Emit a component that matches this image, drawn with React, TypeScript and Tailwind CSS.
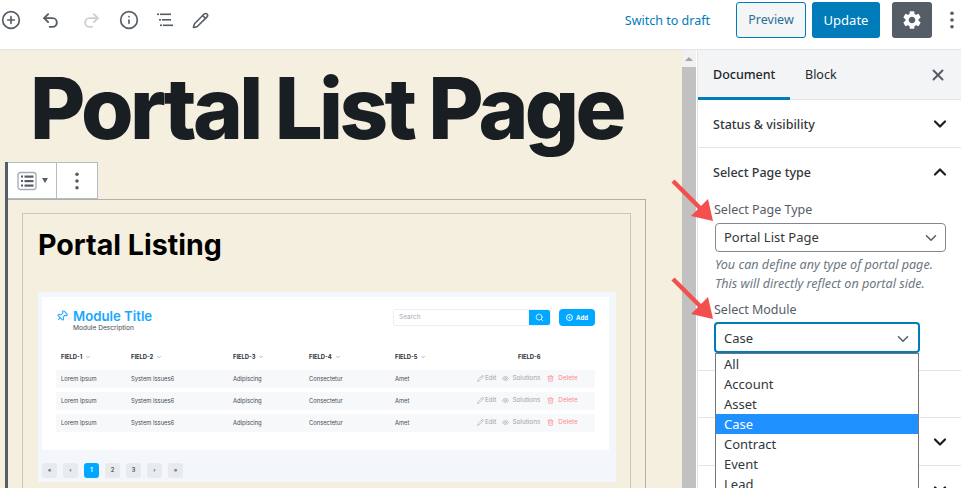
import { ChevronDown, ChevronUp, CirclePlus, Eye, Info, Pencil, Pin, Plus, Redo2, Search, Trash2, Undo2, X } from "lucide-react";
import { MdSettings } from "react-icons/md";

const rows = [0, 1, 2];
const fields = ["FIELD-1", "FIELD-2", "FIELD-3", "FIELD-4", "FIELD-5"];
const options = ["All", "Account", "Asset", "Case", "Contract", "Event", "Lead"];
const pages = ["«", "‹", "1", "2", "3", "›", "»"];

function Dots({ className }: { className?: string }) {
  return (
    <svg viewBox="0 0 4 20" className={className} fill="currentColor">
      <circle cx="2" cy="2.5" r="2" />
      <circle cx="2" cy="10" r="2" />
      <circle cx="2" cy="17.5" r="2" />
    </svg>
  );
}

function RedArrow() {
  return (
    <svg viewBox="0 0 44 44" className="w-[44px] h-[44px]" fill="none">
      <path d="M2 2 L36 36" stroke="#f44f4f" strokeWidth="4.5" />
      <path d="M42 42 L37 20 L20 37 Z" fill="#f44f4f" />
    </svg>
  );
}

function PortalImage() {
  return (
    <div className="mt-[29px] mr-[14px] h-[190px] bg-[#f3f6fa] px-[4px] pt-[5px] font-['Inter',sans-serif] text-[#444b55]">
      <div className="w-[567px] h-[153px] bg-white px-[14px] pt-[12px]">
        <div className="flex items-start h-[37px]">
          <Pin className="w-[12px] h-[12px] text-[#1aa7ff] mt-[1px] rotate-45" strokeWidth={2} />
          <div className="ml-[5px]">
            <div className="text-[13.2px] leading-[14px] font-semibold text-[#1aa7ff]">Module Title</div>
            <div className="text-[6.6px] leading-[8px] mt-[1px]">Module Description</div>
          </div>
          <div className="ml-auto flex items-center">
            <div className="w-[158px] h-[17px] flex border border-[#eceef1] rounded-[2px] bg-white">
              <span className="flex-1 pl-[5px] text-[6.5px] leading-[15px] text-[#a7acb3]">Search</span>
              <span className="w-[21px] bg-[#00a8ff] flex items-center justify-center rounded-r-[2px]">
                <Search className="w-[9px] h-[9px] text-white" />
              </span>
            </div>
            <div className="ml-[8px] w-[36px] h-[17px] rounded-[4px] bg-[#00a8ff] text-white text-[6px] font-bold flex items-center justify-center gap-[3px]">
              <span className="w-[7px] h-[7px] rounded-full border border-white flex items-center justify-center">
                <Plus className="w-[5px] h-[5px]" />
              </span>
              Add
            </div>
          </div>
        </div>
        <div className="grid grid-cols-[70px_102px_76px_86px_82px_1fr] items-center pl-[5px] h-[22px] text-[5.8px] leading-[8px] font-bold text-[#2c3138]">
          {fields.map((f) => (
            <div key={f} className="flex items-center gap-[3px]">
              {f}
              <ChevronDown className="w-[6px] h-[6px] text-[#777]" />
            </div>
          ))}
          <div className="pl-[41px]">FIELD-6</div>
        </div>
        <div className="flex flex-col gap-[4px] mt-[2px]">
          {rows.map((r) => (
            <div key={r} className="grid grid-cols-[70px_102px_76px_86px_82px_1fr] items-center pl-[5px] h-[18px] bg-[#f7f8fa] text-[5.8px]">
              <div>Lorem Ipsum</div>
              <div>System Issues6</div>
              <div>Adipiscing</div>
              <div>Consectetur</div>
              <div>Amet</div>
              <div className="flex items-center gap-[1px] text-[#9ea3ab] text-[6.4px]">
                <Pencil className="w-[7px] h-[7px]" />
                <span className="mr-[5px]">Edit</span>
                <Eye className="w-[7px] h-[7px]" />
                <span className="mr-[6px] ml-[2px]">Solutions</span>
                <Trash2 className="w-[7px] h-[7px] text-[#ff8a8f]" />
                <span className="ml-[3px] text-[#ff8a8f]">Delete</span>
              </div>
            </div>
          ))}
        </div>
      </div>
      <div className="flex gap-[6px] mt-[13px]">
        {pages.map((p) => (
          <div
            key={p}
            className={`w-[15px] h-[15px] rounded-[3px] flex items-center justify-center text-[5.5px] font-bold ${
              p === "1" ? "bg-[#00a8ff] text-white" : "bg-[#e8ebee] text-[#5b6067]"
            }`}
          >
            {p}
          </div>
        ))}
      </div>
    </div>
  );
}

export default function App() {
  return (
    <div className="relative w-[961px] h-[488px] overflow-hidden bg-white flex flex-col font-['Noto_Sans',sans-serif] text-[12.5px]">
      <header className="h-[50px] shrink-0 border-b border-[#e2e4e7] flex items-center pb-[9px] pr-[7px]">
        <div className="flex items-center text-[#555d66]">
          <CirclePlus className="w-[20px] h-[20px] ml-[1px]" strokeWidth={2} />
          <Undo2 className="w-[19px] h-[19px] ml-[20px]" strokeWidth={2.4} />
          <Redo2 className="w-[19px] h-[19px] ml-[22px] text-[#ccd0d4]" strokeWidth={2.4} />
          <Info className="w-[20px] h-[20px] ml-[18px]" strokeWidth={2} />
          <svg viewBox="0 0 16 14" className="w-[16px] h-[14px] ml-[18px]" fill="currentColor">
            <rect x="0" y="0.5" width="2" height="1.6" />
            <rect x="3" y="0.5" width="11" height="1.6" />
            <rect x="2" y="6" width="2" height="1.6" />
            <rect x="5" y="6" width="9" height="1.6" />
            <rect x="3" y="11.5" width="2" height="1.6" />
            <rect x="6" y="11.5" width="10" height="1.6" />
          </svg>
          <Pencil className="w-[17px] h-[17px] ml-[19px]" strokeWidth={2.2} />
        </div>
        <div className="ml-auto text-[#007cba] mr-[26px] pt-[3px]">Switch to draft</div>
        <div className="w-[70px] h-[36px] rounded-[3px] border border-[#007cba] bg-[#f3f5f6] text-[#2d6d99] flex items-center justify-center">Preview</div>
        <div className="ml-[6px] w-[68px] h-[36px] rounded-[3px] bg-[#007cba] text-white flex items-center justify-center pt-[1px] text-[13px]">Update</div>
        <div className="ml-[12px] w-[40px] h-[36px] rounded-[3px] bg-[#555d66] text-white flex items-center justify-center">
          <MdSettings className="w-[22px] h-[22px]" />
        </div>
        <Dots className="ml-[18px] w-[4px] h-[18px] text-[#555d66]" />
      </header>

      <div className="flex-1 min-h-0 flex">
        <main className="w-[682px] shrink-0 bg-[#f5efe0] overflow-hidden">
          <h1 className="pl-[30px] h-[112px] text-[85px] leading-[118px] font-['Inter',sans-serif] font-extrabold tracking-[-0.043em] whitespace-nowrap text-[#191e23]">
            Portal List Page
          </h1>
          <div className="ml-[5px] w-[641px] h-[400px] border-l-[3px] border-[#555d66]">
            <div className="flex h-[37px] w-[90px] bg-white border-y border-r border-[#b5bcc2]">
              <div className="w-[49px] flex items-center pl-[9px] border-r border-[#b5bcc2] text-[#555d66]">
                <svg viewBox="0 0 20 20" className="w-[20px] h-[20px]" fill="none">
                  <rect x="1" y="1.5" width="18" height="17" rx="2.5" stroke="#a2aab2" strokeWidth="1.3" />
                  <g fill="currentColor">
                    <rect x="4" y="4.5" width="2" height="2" />
                    <rect x="7.5" y="4.5" width="9" height="2.2" />
                    <rect x="4" y="9" width="2" height="2" />
                    <rect x="7.5" y="9" width="9" height="2.2" />
                    <rect x="4" y="13.5" width="2" height="2" />
                    <rect x="7.5" y="13.5" width="9" height="2.2" />
                  </g>
                </svg>
                <span className="ml-[5px] w-0 h-0 border-x-[3px] border-x-transparent border-t-[5px] border-t-[#555d66]" />
              </div>
              <div className="flex-1 flex items-center justify-center">
                <Dots className="w-[4px] h-[18px] text-[#555d66]" />
              </div>
            </div>
            <div className="border-t border-r border-[#aeb0a9] h-full pl-[14px] pt-[13px] pr-[14px]">
              <div className="border-t border-l border-r border-[#c9c8bf] h-full pl-[15px]">
                <h2 className="pt-[13px] text-[28.6px] leading-[36px] font-['Inter',sans-serif] font-bold text-black">Portal Listing</h2>
                <PortalImage />
              </div>
            </div>
          </div>
        </main>

        <div className="w-[14px] shrink-0 bg-[#f1f1f1] flex flex-col">
          <div className="h-[17px] flex items-center justify-center">
            <span className="w-0 h-0 border-x-[4px] border-x-transparent border-b-[4px] border-b-[#a3a3a3]" />
          </div>
          <div className="flex-1 bg-[#c1c1c1]" />
        </div>
        <div className="w-[1px] shrink-0 bg-white" />

        <aside className="flex-1 min-w-0 border-l border-[#e2e4e7] text-[#32373c]">
          <div className="h-[50px] bg-[#f3f4f5] border-b border-[#e2e4e7] flex items-center relative">
            <div className="w-[92px] h-[50px] border-b-[3px] border-[#007cba] flex items-center pl-[15px] pt-[5px] font-medium text-[#23282d]">Document</div>
            <div className="ml-[15px] pt-[2px] text-[#23282d]">Block</div>
            <X className="ml-auto mr-[14px] w-[18px] h-[18px] text-[#555d66]" strokeWidth={2.6} />
          </div>
          <div className="h-[48px] border-b border-[#e2e4e7] flex items-center pl-[15px] pr-[11px] font-medium">
            <span className="pt-[4px]">Status &amp; visibility</span>
            <ChevronDown className="ml-auto w-[20px] h-[20px] text-[#191e23]" strokeWidth={2.6} />
          </div>
          <div className="h-[223px] border-b border-[#e2e4e7]">
            <div className="h-[48px] flex items-center pl-[15px] pr-[11px] font-medium">
              <span className="pt-[2px]">Select Page type</span>
              <ChevronUp className="ml-auto w-[20px] h-[20px] text-[#191e23]" strokeWidth={2.6} />
            </div>
            <div className="pl-[16px] text-[#555d66]">
              <div className="leading-[18px] pt-[5px]">Select Page Type</div>
              <div className="mt-[4px] ml-[1px] w-[231px] h-[29px] rounded-[4px] border border-[#7e8993] bg-white flex items-center pl-[8px] pr-[5px] pt-[1px] text-[#32373c] text-[13px]">
                Portal List Page
                <ChevronDown className="ml-auto w-[18px] h-[18px] text-[#555d66]" strokeWidth={2} />
              </div>
              <div className="mt-[3px] ml-[1px] text-[12.6px] leading-[19px] italic text-[#6c7781]">
                You can define any type of portal page.
                <br />
                This will directly reflect on portal side.
              </div>
              <div className="mt-[8px] leading-[18px]">Select Module</div>
              <div className="mt-[3px] w-[206px] h-[31px] rounded-[4px] border-2 border-[#007cba] bg-white flex items-center pl-[8px] pr-[6px] pt-[2px] text-[#32373c] text-[13px]">
                Case
                <ChevronDown className="ml-auto w-[18px] h-[18px] text-[#555d66]" strokeWidth={2} />
              </div>
            </div>
          </div>
          <div className="h-[47px] border-b border-[#e2e4e7]" />
          <div className="h-[48px] border-b border-[#e2e4e7] flex items-center pr-[11px]">
            <ChevronDown className="ml-auto w-[20px] h-[20px] text-[#191e23]" strokeWidth={2.6} />
          </div>
          <div className="h-[48px] flex items-start pt-[14px] pr-[11px]">
            <ChevronDown className="ml-auto w-[20px] h-[20px] text-[#191e23]" strokeWidth={2.6} />
          </div>
        </aside>
      </div>

      {/* open select list */}
      <ul className="absolute left-[715px] top-[353px] w-[204px] h-[135px] border border-[#767676] border-b-0 bg-white text-[#32373c] text-[13px] overflow-hidden">
        {options.map((o) => (
          <li key={o} className={`h-[20px] leading-[20px] pl-[8px] ${o === "Case" ? "bg-[#1e90ff] text-white" : ""}`}>
            {o}
          </li>
        ))}
      </ul>

      <div className="absolute left-[671px] top-[179px]"><RedArrow /></div>
      <div className="absolute left-[671px] top-[277px]"><RedArrow /></div>
    </div>
  );
}
